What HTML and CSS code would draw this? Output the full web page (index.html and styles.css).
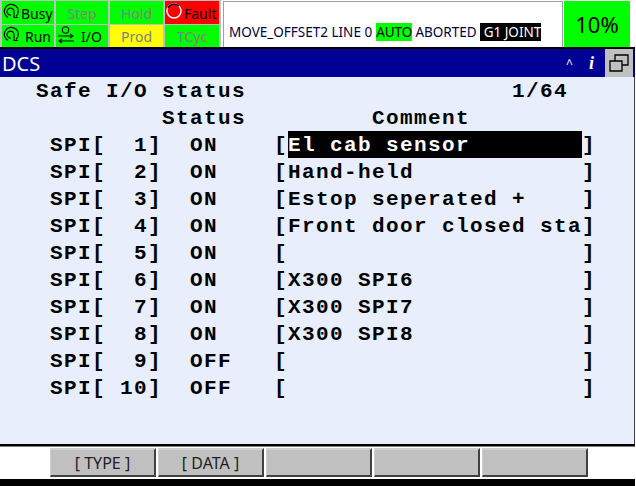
FILE: index.html
```html
<!DOCTYPE html>
<html>
<head>
  <title>DCS</title>
  <link rel="stylesheet" href="styles.css">
</head>
<body>
  <div id="screen">
    <div id="top-bar">
      <div id="lamps">
        <div class="lamp on">
          <svg class="spin-icon" viewBox="0 0 16 16"><path d="M5 14.5A7 7 0 1 1 13 13.5M8 12A3.5 3.5 0 1 1 11 9L11 14.5L15 14.5"/></svg>
          Busy
        </div>
        <div class="lamp on dim center">Step</div>
        <div class="lamp on dim center">Hold</div>
        <div class="lamp fault">
          <svg class="fault-icon" viewBox="0 0 16 16">
            <circle class="fault-ring" cx="8" cy="8" r="7"/>
            <path class="fault-shade" d="M2 5A7 7 0 0 1 13 3"/>
          </svg>
          Fault
        </div>
        <div class="lamp on">
          <svg class="spin-icon" viewBox="0 0 16 16"><path d="M5 14.5A7 7 0 1 1 13 13.5M8 12A3.5 3.5 0 1 1 11 9L11 14.5L15 14.5"/></svg>
          <span class="lamp-gap">Run</span>
        </div>
        <div class="lamp on">
          <svg class="io-icon" viewBox="0 0 18 18">
            <circle cx="8.5" cy="4" r="3.2"/>
            <path d="M1 10H16M13 8L16 10L13 12M17 15H2M5 13L2 15L5 17"/>
          </svg>
          <span class="lamp-gap">I/O</span>
        </div>
        <div class="lamp prod dim center">Prod</div>
        <div class="lamp on dim center">TCyc</div>
      </div>
      <div id="status-line">
        <span>MOVE_OFFSET2 LINE 0</span>
        <span class="auto">AUTO</span>
        <span>ABORTED</span>
        <span class="joint">G1 JOINT</span>
      </div>
      <div id="override">10%</div>
    </div>

    <div id="title-bar">
      <span id="title">DCS</span>
      <span id="caret">^</span>
      <span id="info">i</span>
      <span id="window-btn">
        <svg viewBox="0 0 20 18"><path d="M1 7H13V17H1ZM6 7V1H19V11H13"/></svg>
      </span>
    </div>

    <div id="content">
      <div class="line">  Safe I/O status                   1/64</div>
      <div class="line">           Status         Comment</div>
      <div class="line">   SPI[  1]  ON    [<span class="selected">El cab sensor        </span>]</div>
      <div class="line">   SPI[  2]  ON    [Hand-held            ]</div>
      <div class="line">   SPI[  3]  ON    [Estop seperated +    ]</div>
      <div class="line">   SPI[  4]  ON    [Front door closed sta]</div>
      <div class="line">   SPI[  5]  ON    [                     ]</div>
      <div class="line">   SPI[  6]  ON    [X300 SPI6            ]</div>
      <div class="line">   SPI[  7]  ON    [X300 SPI7            ]</div>
      <div class="line">   SPI[  8]  ON    [X300 SPI8            ]</div>
      <div class="line">   SPI[  9]  OFF   [                     ]</div>
      <div class="line">   SPI[ 10]  OFF   [                     ]</div>
    </div>

    <div id="func-keys">
      <button class="key">[ TYPE ]</button>
      <button class="key">[ DATA ]</button>
      <button class="key"></button>
      <button class="key"></button>
      <button class="key"></button>
    </div>
  </div>
</body>
</html>
```
FILE: styles.css
```css
body {
  margin: 0;
  background: white;
  font-family: 'Noto Sans', 'DejaVu Sans', sans-serif;
  overflow: hidden;
}

#screen {
  width: 635px;
  height: 486px;
  display: flex;
  flex-direction: column;
}

#top-bar {
  height: 47px;
  flex: none;
  display: flex;
  border-bottom: 2px solid black;
  background: white;
}

#lamps {
  width: 221px;
  flex: none;
  display: grid;
  grid-template-columns: 52px 52px 53px 54px;
  grid-template-rows: 23px 22px;
  column-gap: 2px;
  row-gap: 1px;
  padding: 1px 0 0 2px;
  box-sizing: border-box;
  background: #c0c0c0;
}

.lamp {
  display: flex;
  align-items: center;
  gap: 2px;
  font-size: 14px;
  line-height: 22px;
  padding-top: 2px;
  box-sizing: border-box;
  color: black;
}

.center { justify-content: center; }
.on { background: #00ff00; }
.fault { background: #ff0000; }
.prod { background: #ffff00; }
.dim { color: #808080; }

.lamp-gap { margin-left: 4px; }

.spin-icon {
  width: 16px;
  height: 16px;
  flex: none;
  margin: -6px 0 0 1px;
  fill: none;
  stroke: black;
  stroke-width: 1.2;
}

.fault-icon {
  width: 16px;
  height: 16px;
  flex: none;
  margin: -6px 0 0 1px;
  fill: #ff0000;
}

.fault-ring {
  stroke: white;
  stroke-width: 1.5;
}

.fault-shade {
  fill: none;
  stroke: black;
  stroke-width: 1.5;
}

.io-icon {
  width: 18px;
  height: 18px;
  flex: none;
  margin: -4px 0 0 1px;
  fill: none;
  stroke: black;
  stroke-width: 1.1;
}

#status-line {
  flex: 1;
  background: white;
  border: 1px solid #a0a0a0;
  border-bottom: none;
  margin: 1px 0 0 2px;
  display: flex;
  align-items: center;
  gap: 3px;
  padding: 14px 0 0 5px;
  font-size: 13.5px;
  color: #000040;
}

.auto {
  background: #00ff00;
  color: black;
  line-height: 18px;
  margin-left: 1px;
}

.joint {
  background: black;
  color: white;
  line-height: 18px;
  padding-left: 4px;
}

#override {
  width: 66px;
  flex: none;
  margin: 1px 5px 0 1px;
  background: #00ff00;
  font-size: 22px;
  display: flex;
  align-items: center;
  justify-content: center;
}

#title-bar {
  height: 28px;
  flex: none;
  background: #000094;
  color: white;
  display: flex;
  align-items: center;
  font-size: 20px;
}

#title {
  flex: 1;
  padding-left: 2px;
}

#caret {
  font-size: 12px;
  margin-right: 16px;
}

#info {
  font-family: 'Liberation Serif', serif;
  font-style: italic;
  font-weight: bold;
  font-size: 18px;
  margin-right: 11px;
}

#window-btn {
  width: 28px;
  height: 28px;
  background: #c0c0c0;
  display: flex;
  align-items: center;
  justify-content: center;
  margin-right: 2px;
}

#window-btn svg {
  width: 20px;
  height: 18px;
  fill: none;
  stroke: black;
  stroke-width: 1.3;
}

#content {
  flex: 1;
  background: #e8eefc;
  padding-left: 8px;
  border-right: 1px solid #404040;
  font-family: 'Liberation Mono', monospace;
  font-weight: bold;
  font-size: 21px;
  letter-spacing: 1.4px;
  color: black;
}

.line {
  height: 27px;
  line-height: 29px;
  white-space: pre;
}

.selected {
  background: black;
  color: white;
  display: inline-block;
  height: 27px;
}

#func-keys {
  height: 42px;
  flex: none;
  box-sizing: border-box;
  border-top: 2px solid black;
  border-bottom: 7px solid black;
  padding: 2px 47px 0 50px;
  display: flex;
  gap: 2px;
  background: white;
  box-shadow: inset 0 1px 0 #808080;
}

.key {
  flex: 1;
  height: 29px;
  padding: 0;
  background: #c0c0c0;
  border-style: solid;
  border-width: 2px 2px 2px 1px;
  border-color: #d0d0d0 #404040 #404040 #d0d0d0;
  font-family: 'Noto Sans', sans-serif;
  font-size: 16px;
  color: #202020;
}
```
